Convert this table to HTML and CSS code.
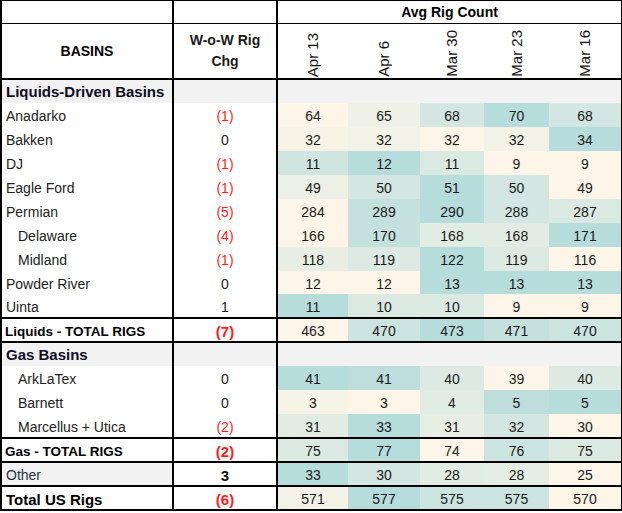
FILE: index.html
```html
<!DOCTYPE html>
<html>
<head>
<meta charset="utf-8">
<link rel="stylesheet" href="styles.css">
</head>
<body>
<table class="rig">
  <colgroup>
    <col class="c-basin"><col class="c-wow"><col class="c-d1"><col class="c-d2"><col class="c-d3"><col class="c-d4"><col class="c-d5">
  </colgroup>
  <thead>
    <tr class="h1">
      <th class="basin"></th><th class="wow"></th><th class="avg" colspan="5">Avg Rig Count</th>
    </tr>
    <tr class="h2">
      <th class="basin">BASINS</th>
      <th class="wow">W-o-W Rig<br>Chg</th>
      <th class="date"><span>Apr 13</span></th>
      <th class="date"><span>Apr 6</span></th>
      <th class="date"><span>Mar 30</span></th>
      <th class="date"><span>Mar 23</span></th>
      <th class="date"><span>Mar 16</span></th>
    </tr>
  </thead>
  <tbody>
    <tr class="section"><td class="basin">Liquids-Driven Basins</td><td class="wow"></td><td colspan="5"></td></tr>
    <tr><td class="basin">Anadarko</td><td class="wow neg">(1)</td>
      <td style="background:#fdf6e8">64</td><td style="background:#eff1e6">65</td><td style="background:#d3e6e1">68</td><td style="background:#b7dcdc">70</td><td style="background:#d3e6e1">68</td></tr>
    <tr><td class="basin">Bakken</td><td class="wow">0</td>
      <td style="background:#f6f3e7">32</td><td style="background:#f3f2e6">32</td><td style="background:#fdf6e8">32</td><td style="background:#f3f2e6">32</td><td style="background:#b7dcdc">34</td></tr>
    <tr><td class="basin">DJ</td><td class="wow neg">(1)</td>
      <td style="background:#d0e5e0">11</td><td style="background:#b7dcdc">12</td><td style="background:#dae9e2">11</td><td style="background:#fdf6e8">9</td><td style="background:#fdf6e8">9</td></tr>
    <tr><td class="basin">Eagle Ford</td><td class="wow neg">(1)</td>
      <td style="background:#ecf0e5">49</td><td style="background:#d3e6e1">50</td><td style="background:#b7dcdc">51</td><td style="background:#d3e6e1">50</td><td style="background:#fdf6e8">49</td></tr>
    <tr><td class="basin">Permian</td><td class="wow neg">(5)</td>
      <td style="background:#fdf6e8">284</td><td style="background:#c5e1de">289</td><td style="background:#b7dcdc">290</td><td style="background:#d3e6e1">288</td><td style="background:#dae9e2">287</td></tr>
    <tr><td class="basin sub">Delaware</td><td class="wow neg">(4)</td>
      <td style="background:#fdf6e8">166</td><td style="background:#c5e1de">170</td><td style="background:#e1ece3">168</td><td style="background:#e1ece3">168</td><td style="background:#b7dcdc">171</td></tr>
    <tr><td class="basin sub">Midland</td><td class="wow neg">(1)</td>
      <td style="background:#e8eee4">118</td><td style="background:#ddeae3">119</td><td style="background:#b7dcdc">122</td><td style="background:#ddeae3">119</td><td style="background:#fdf6e8">116</td></tr>
    <tr class="short"><td class="basin">Powder River</td><td class="wow">0</td>
      <td style="background:#fdf6e8">12</td><td style="background:#fdf6e8">12</td><td style="background:#b7dcdc">13</td><td style="background:#b7dcdc">13</td><td style="background:#b7dcdc">13</td></tr>
    <tr class="short"><td class="basin">Uinta</td><td class="wow">1</td>
      <td style="background:#b7dcdc">11</td><td style="background:#dae9e2">10</td><td style="background:#dae9e2">10</td><td style="background:#fdf6e8">9</td><td style="background:#fdf6e8">9</td></tr>
    <tr class="total"><td class="basin tot-name">Liquids - TOTAL RIGS</td><td class="wow neg strong">(7)</td>
      <td style="background:#fdf6e8">463</td><td style="background:#cce4e0">470</td><td style="background:#b7dcdc">473</td><td style="background:#c5e1de">471</td><td style="background:#cce4e0">470</td></tr>
    <tr class="section"><td class="basin">Gas Basins</td><td class="wow"></td><td colspan="5"></td></tr>
    <tr><td class="basin sub">ArkLaTex</td><td class="wow">0</td>
      <td style="background:#b7dcdc">41</td><td style="background:#bededd">41</td><td style="background:#ddeae3">40</td><td style="background:#fdf6e8">39</td><td style="background:#ddeae3">40</td></tr>
    <tr><td class="basin sub">Barnett</td><td class="wow">0</td>
      <td style="background:#f6f3e7">3</td><td style="background:#fdf6e8">3</td><td style="background:#e1ece3">4</td><td style="background:#bededd">5</td><td style="background:#b7dcdc">5</td></tr>
    <tr class="short"><td class="basin sub">Marcellus + Utica</td><td class="wow neg">(2)</td>
      <td style="background:#e1ece3">31</td><td style="background:#b7dcdc">33</td><td style="background:#e8eee4">31</td><td style="background:#d3e6e1">32</td><td style="background:#fdf6e8">30</td></tr>
    <tr class="total"><td class="basin tot-name">Gas - TOTAL RIGS</td><td class="wow neg strong">(2)</td>
      <td style="background:#dae9e2">75</td><td style="background:#b7dcdc">77</td><td style="background:#fdf6e8">74</td><td style="background:#cce4e0">76</td><td style="background:#dae9e2">75</td></tr>
    <tr class="total other"><td class="basin other-name">Other</td><td class="wow strong">3</td>
      <td style="background:#b7dcdc">33</td><td style="background:#d3e6e1">30</td><td style="background:#e1ece3">28</td><td style="background:#e4ede4">28</td><td style="background:#fdf6e8">25</td></tr>
    <tr class="total grand"><td class="basin grand-name">Total US Rigs</td><td class="wow neg strong">(6)</td>
      <td style="background:#f3f2e6">571</td><td style="background:#b7dcdc">577</td><td style="background:#cce4e0">575</td><td style="background:#cce4e0">575</td><td style="background:#fdf6e8">570</td></tr>
  </tbody>
</table>
</body>
</html>
```
FILE: styles.css
```css
html, body {
  margin: 0;
  padding: 0;
  background: #ffffff;
}

.rig {
  border-collapse: collapse;
  table-layout: fixed;
  width: 621px;
  font-family: "Liberation Sans", Arial, sans-serif;
  font-size: 14px;
  color: #1a1a1a;
  border-top: 1px solid #000;
  border-left: 2px solid #000;
  border-right: 2px solid #000;
  border-bottom: 2px solid #000;
}

.c-basin { width: 172px; }
.c-wow { width: 104px; }
.c-d1 { width: 71px; }
.c-d2 { width: 72px; }
.c-d3 { width: 64px; }
.c-d4 { width: 65px; }
.c-d5 { width: 73px; }

.rig th,
.rig td {
  padding: 0;
  text-align: center;
  vertical-align: middle;
  white-space: nowrap;
}

.rig td {
  height: 22px;
  padding-top: 2px;
}

.rig .basin {
  border-right: 2px solid #000;
  text-align: left;
  padding-left: 4px;
  color: #222;
}

.rig .wow {
  border-right: 2px solid #000;
}

.h1 th {
  height: 22px;
  border-bottom: 1px solid #000;
  font-weight: bold;
}

.h2 th {
  height: 53px;
  border-bottom: 2px solid #000;
  font-weight: bold;
  line-height: 21px;
}

.h2 th.basin {
  text-align: center;
  padding-left: 0;
  color: #000;
}

.avg {
  color: #000;
}

.date {
  vertical-align: bottom !important;
  font-weight: normal !important;
  padding-bottom: 1px !important;
}

.date span {
  display: block;
  width: 18px;
  margin: 0 auto;
  writing-mode: vertical-rl;
  transform: rotate(180deg);
  font-size: 15px;
  line-height: 18px;
  color: #111;
}

.section td {
  background: #f2f2f2;
  padding-top: 0;
  height: 23px;
}

.section .basin {
  font-weight: bold;
  font-size: 15px;
  color: #0d0d1f;
}

.sub {
  padding-left: 16px !important;
}

.neg {
  color: #ff1a1a;
}

.strong {
  font-weight: bold;
  font-size: 15px;
}

.short td {
  height: 21px;
}

.total td {
  height: 20px;
  border-top: 2px solid #000;
  border-bottom: 2px solid #000;
}

.tot-name {
  font-weight: bold;
  font-size: 13.5px;
  color: #000 !important;
  padding-left: 3px !important;
}

.other .other-name {
  background: #f2f2f2;
  color: #23324a;
}

.other .strong {
  color: #111;
}

.grand-name {
  font-weight: bold;
  font-size: 15px;
  color: #000 !important;
}
```
